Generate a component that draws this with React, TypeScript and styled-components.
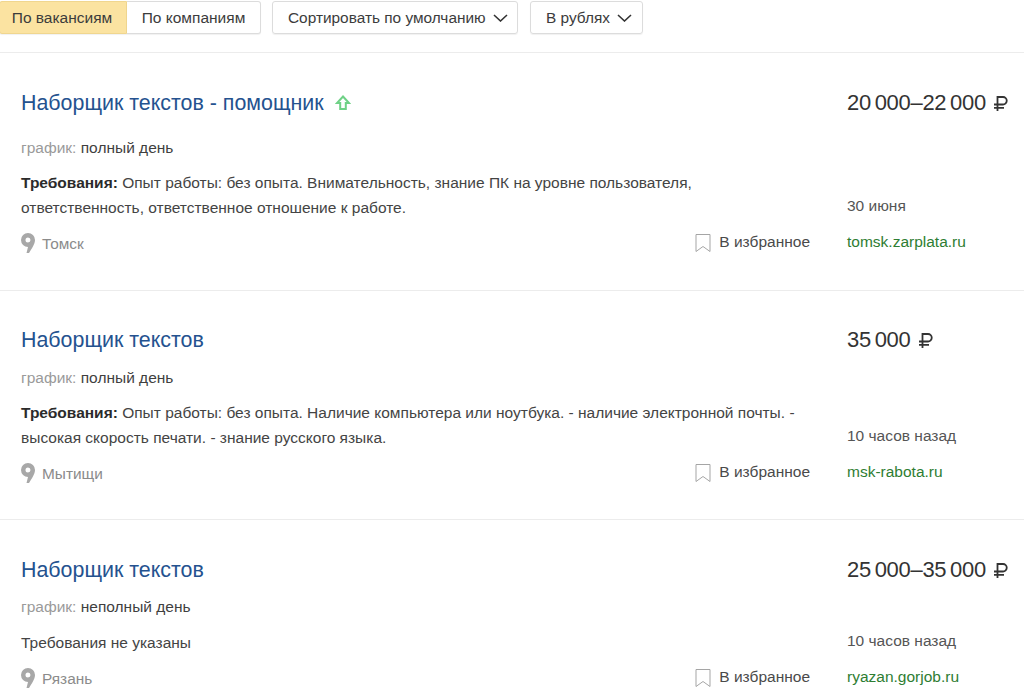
import React from 'react';
import styled, { createGlobalStyle } from 'styled-components';

const GlobalStyle = createGlobalStyle`
    html, body {
        margin: 0;
        padding: 0;
        background: #fff;
        overflow: hidden;
    }
    body {
        font-family: "Liberation Sans", Arial, sans-serif;
        color: #333;
    }
`;

const Page = styled.div`
    width: 1024px;
    height: 688px;
    overflow: hidden;
`;

const Toolbar = styled.div`
    display: flex;
    align-items: flex-start;
    height: 53px;
    padding-top: 1px;
    box-sizing: border-box;
    border-bottom: 1px solid #ececec;
`;

const Segments = styled.div`
    display: flex;
    margin-left: -1px;
    margin-right: 11px;
`;

const Segment = styled.div<{ $active?: boolean }>`
    display: flex;
    align-items: center;
    justify-content: center;
    box-sizing: border-box;
    height: 33px;
    width: ${(p) => (p.$active ? '128px' : '134px')};
    padding-right: ${(p) => (p.$active ? '2px' : '0')};
    font-size: 15.5px;
    color: #3c3c3c;
    background: ${(p) => (p.$active ? '#fbe3a1' : '#fff')};
    border: 1px solid ${(p) => (p.$active ? '#f0d68f' : '#dcdcdc')};
    border-left-width: ${(p) => (p.$active ? '1px' : '0')};
    border-radius: ${(p) => (p.$active ? '3px 0 0 3px' : '0 3px 3px 0')};
    box-shadow: 0 1px 1px rgb(0 0 0 / 6%);
`;

const Dropdown = styled.div<{ $width: number }>`
    display: flex;
    align-items: center;
    gap: 7px;
    box-sizing: border-box;
    height: 33px;
    width: ${(p) => p.$width}px;
    margin-right: 12px;
    padding-left: 15px;
    font-size: 15.4px;
    color: #3c3c3c;
    border: 1px solid #dcdcdc;
    border-radius: 3px;
    box-shadow: 0 1px 1px rgb(0 0 0 / 6%);
`;

const Card = styled.section<{ $height: number; $last?: boolean }>`
    display: grid;
    grid-template-columns: 826px 1fr;
    box-sizing: border-box;
    height: ${(p) => p.$height}px;
    padding-left: 21px;
    border-bottom: ${(p) => (p.$last ? 'none' : '1px solid #ececec')};
`;

const Main = styled.div<{ $top: number }>`
    display: flex;
    flex-direction: column;
    padding-top: ${(p) => p.$top}px;
`;

const TitleRow = styled.div`
    display: flex;
    align-items: center;
    gap: 11px;
    height: 26px;
`;

const Title = styled.a`
    font-size: 21.4px;
    line-height: 26px;
    color: #24528f;
`;

const Meta = styled.div<{ $gap: number }>`
    margin-top: ${(p) => p.$gap}px;
    font-size: 15.5px;
    line-height: 18px;
    color: #3f3f3f;
`;

const MetaLabel = styled.span`
    color: #9a9a9a;
`;

const Requirements = styled.p<{ $gap: number }>`
    margin: ${(p) => p.$gap}px 0 0;
    font-size: 15.5px;
    line-height: 25px;
    color: #444;
`;

const RequirementsLabel = styled.b`
    color: #2b2b2b;
`;

const Footer = styled.div<{ $gap: number }>`
    display: flex;
    align-items: center;
    justify-content: space-between;
    margin-top: ${(p) => p.$gap}px;
    padding-right: 37px;
    height: 22px;
`;

const Location = styled.div`
    display: flex;
    align-items: center;
    gap: 7px;
    font-size: 15.4px;
    color: #8b8b8b;
`;

const CityName = styled.span`
    padding-top: 2px;
`;

const Favorite = styled.div`
    display: flex;
    align-items: center;
    gap: 8px;
    font-size: 15.5px;
    color: #4a4a4a;
`;

const FavoriteLabel = styled.span`
    padding-bottom: 2px;
`;

const Side = styled.aside<{ $top: number; $bottom: number }>`
    display: flex;
    flex-direction: column;
    padding-top: ${(p) => p.$top}px;
    padding-bottom: ${(p) => p.$bottom}px;
`;

const Price = styled.div`
    display: flex;
    align-items: center;
    gap: 8px;
    height: 26px;
    font-size: 22px;
    letter-spacing: -0.3px;
    word-spacing: -2px;
    color: #333;
`;

const PostedAt = styled.div`
    margin-top: auto;
    font-size: 15.5px;
    line-height: 18px;
    color: #555;
`;

const Source = styled.a`
    margin-top: 18px;
    font-size: 15.5px;
    line-height: 18px;
    color: #2e7d32;
`;

const Chevron = () => (
    <svg width="15" height="8" viewBox="0 0 15 8" fill="none" stroke="#333" strokeWidth="1.6">
        <path d="M1 1l6.500 6L14 1" />
    </svg>
);

const ArrowUp = () => (
    <svg width="16" height="16" viewBox="0 0 16 16" fill="none" stroke="#6fd186" strokeWidth="2">
        <path d="M8 1.500L14 8h-3.200v6H5.200V8H2z" />
    </svg>
);

const Ruble = () => (
    <svg width="14" height="15" viewBox="0 0 14 15" fill="none" stroke="#333" strokeWidth="1.8">
        <path d="M3.500 15V1H9a3.500 3.500 0 0 1 0 7.500H0M0 11.800h10" />
    </svg>
);

const Pin = () => (
    <svg width="14" height="20" viewBox="0 0 14 20">
        <path
            fillRule="evenodd"
            fill="#a8a8a8"
            d="M7 0a7 7 0 0 1 7 7c0 4-3.500 9-6 13H5.500L7 14A7 7 0 0 1 7 0zm0 4.500a2.500 2.500 0 1 0 0 5 2.500 2.500 0 0 0 0-5z"
        />
    </svg>
);

const Bookmark = () => (
    <svg width="16" height="18" viewBox="0 0 16 18" fill="none" stroke="#a5a5a5" strokeWidth="1">
        <path d="M1 .5h14v17l-7-5-7 5z" />
    </svg>
);

type Vacancy = {
    title: string;
    promoted?: boolean;
    price: string;
    schedule: string;
    requirements: string[];
    bold: boolean;
    city: string;
    postedAt: string;
    source: string;
    height: number;
    top: number;
    metaGap: number;
    reqGap: number;
    footerGap: number;
    bottom: number;
};

const vacancies: Vacancy[] = [
    {
        title: 'Наборщик текстов - помощник',
        promoted: true,
        price: '20 000–22 000',
        schedule: 'полный день',
        requirements: [
            'Опыт работы: без опыта. Внимательность, знание ПК на уровне пользователя,',
            'ответственность, ответственное отношение к работе.',
        ],
        bold: true,
        city: 'Томск',
        postedAt: '30 июня',
        source: 'tomsk.zarplata.ru',
        height: 238,
        top: 37,
        metaGap: 23,
        reqGap: 13,
        footerGap: 12,
        bottom: 39,
    },
    {
        title: 'Наборщик текстов',
        price: '35 000',
        schedule: 'полный день',
        requirements: [
            'Опыт работы: без опыта. Наличие компьютера или ноутбука. - наличие электронной почты. -',
            'высокая скорость печати. - знание русского языка.',
        ],
        bold: true,
        city: 'Мытищи',
        postedAt: '10 часов назад',
        source: 'msk-rabota.ru',
        height: 229,
        top: 36,
        metaGap: 16,
        reqGap: 13,
        footerGap: 12,
        bottom: 38,
    },
    {
        title: 'Наборщик текстов',
        price: '25 000–35 000',
        schedule: 'неполный день',
        requirements: ['Требования не указаны'],
        bold: false,
        city: 'Рязань',
        postedAt: '10 часов назад',
        source: 'ryazan.gorjob.ru',
        height: 168,
        top: 37,
        metaGap: 15,
        reqGap: 14,
        footerGap: 12,
        bottom: 3,
    },
];

const App = () => {
    return (
        <Page>
            <GlobalStyle />
            <Toolbar>
                <Segments>
                    <Segment $active>По вакансиям</Segment>
                    <Segment>По компаниям</Segment>
                </Segments>
                <Dropdown $width={246}>
                    Сортировать по умолчанию
                    <Chevron />
                </Dropdown>
                <Dropdown $width={113}>
                    В рублях
                    <Chevron />
                </Dropdown>
            </Toolbar>
            {vacancies.map((v, i) => (
                <Card key={i} $height={v.height} $last={i === vacancies.length - 1}>
                    <Main $top={v.top}>
                        <TitleRow>
                            <Title>{v.title}</Title>
                            {v.promoted && <ArrowUp />}
                        </TitleRow>
                        <Meta $gap={v.metaGap}>
                            <MetaLabel>график:</MetaLabel> {v.schedule}
                        </Meta>
                        <Requirements $gap={v.reqGap}>
                            {v.bold && <RequirementsLabel>Требования: </RequirementsLabel>}
                            {v.requirements[0]}
                            {v.requirements[1] && <br />}
                            {v.requirements[1]}
                        </Requirements>
                        <Footer $gap={v.footerGap}>
                            <Location>
                                <Pin />
                                <CityName>{v.city}</CityName>
                            </Location>
                            <Favorite>
                                <Bookmark />
                                <FavoriteLabel>В избранное</FavoriteLabel>
                            </Favorite>
                        </Footer>
                    </Main>
                    <Side $top={v.top} $bottom={v.bottom}>
                        <Price>
                            {v.price}
                            <Ruble />
                        </Price>
                        <PostedAt>{v.postedAt}</PostedAt>
                        <Source>{v.source}</Source>
                    </Side>
                </Card>
            ))}
        </Page>
    );
};

export default App;
